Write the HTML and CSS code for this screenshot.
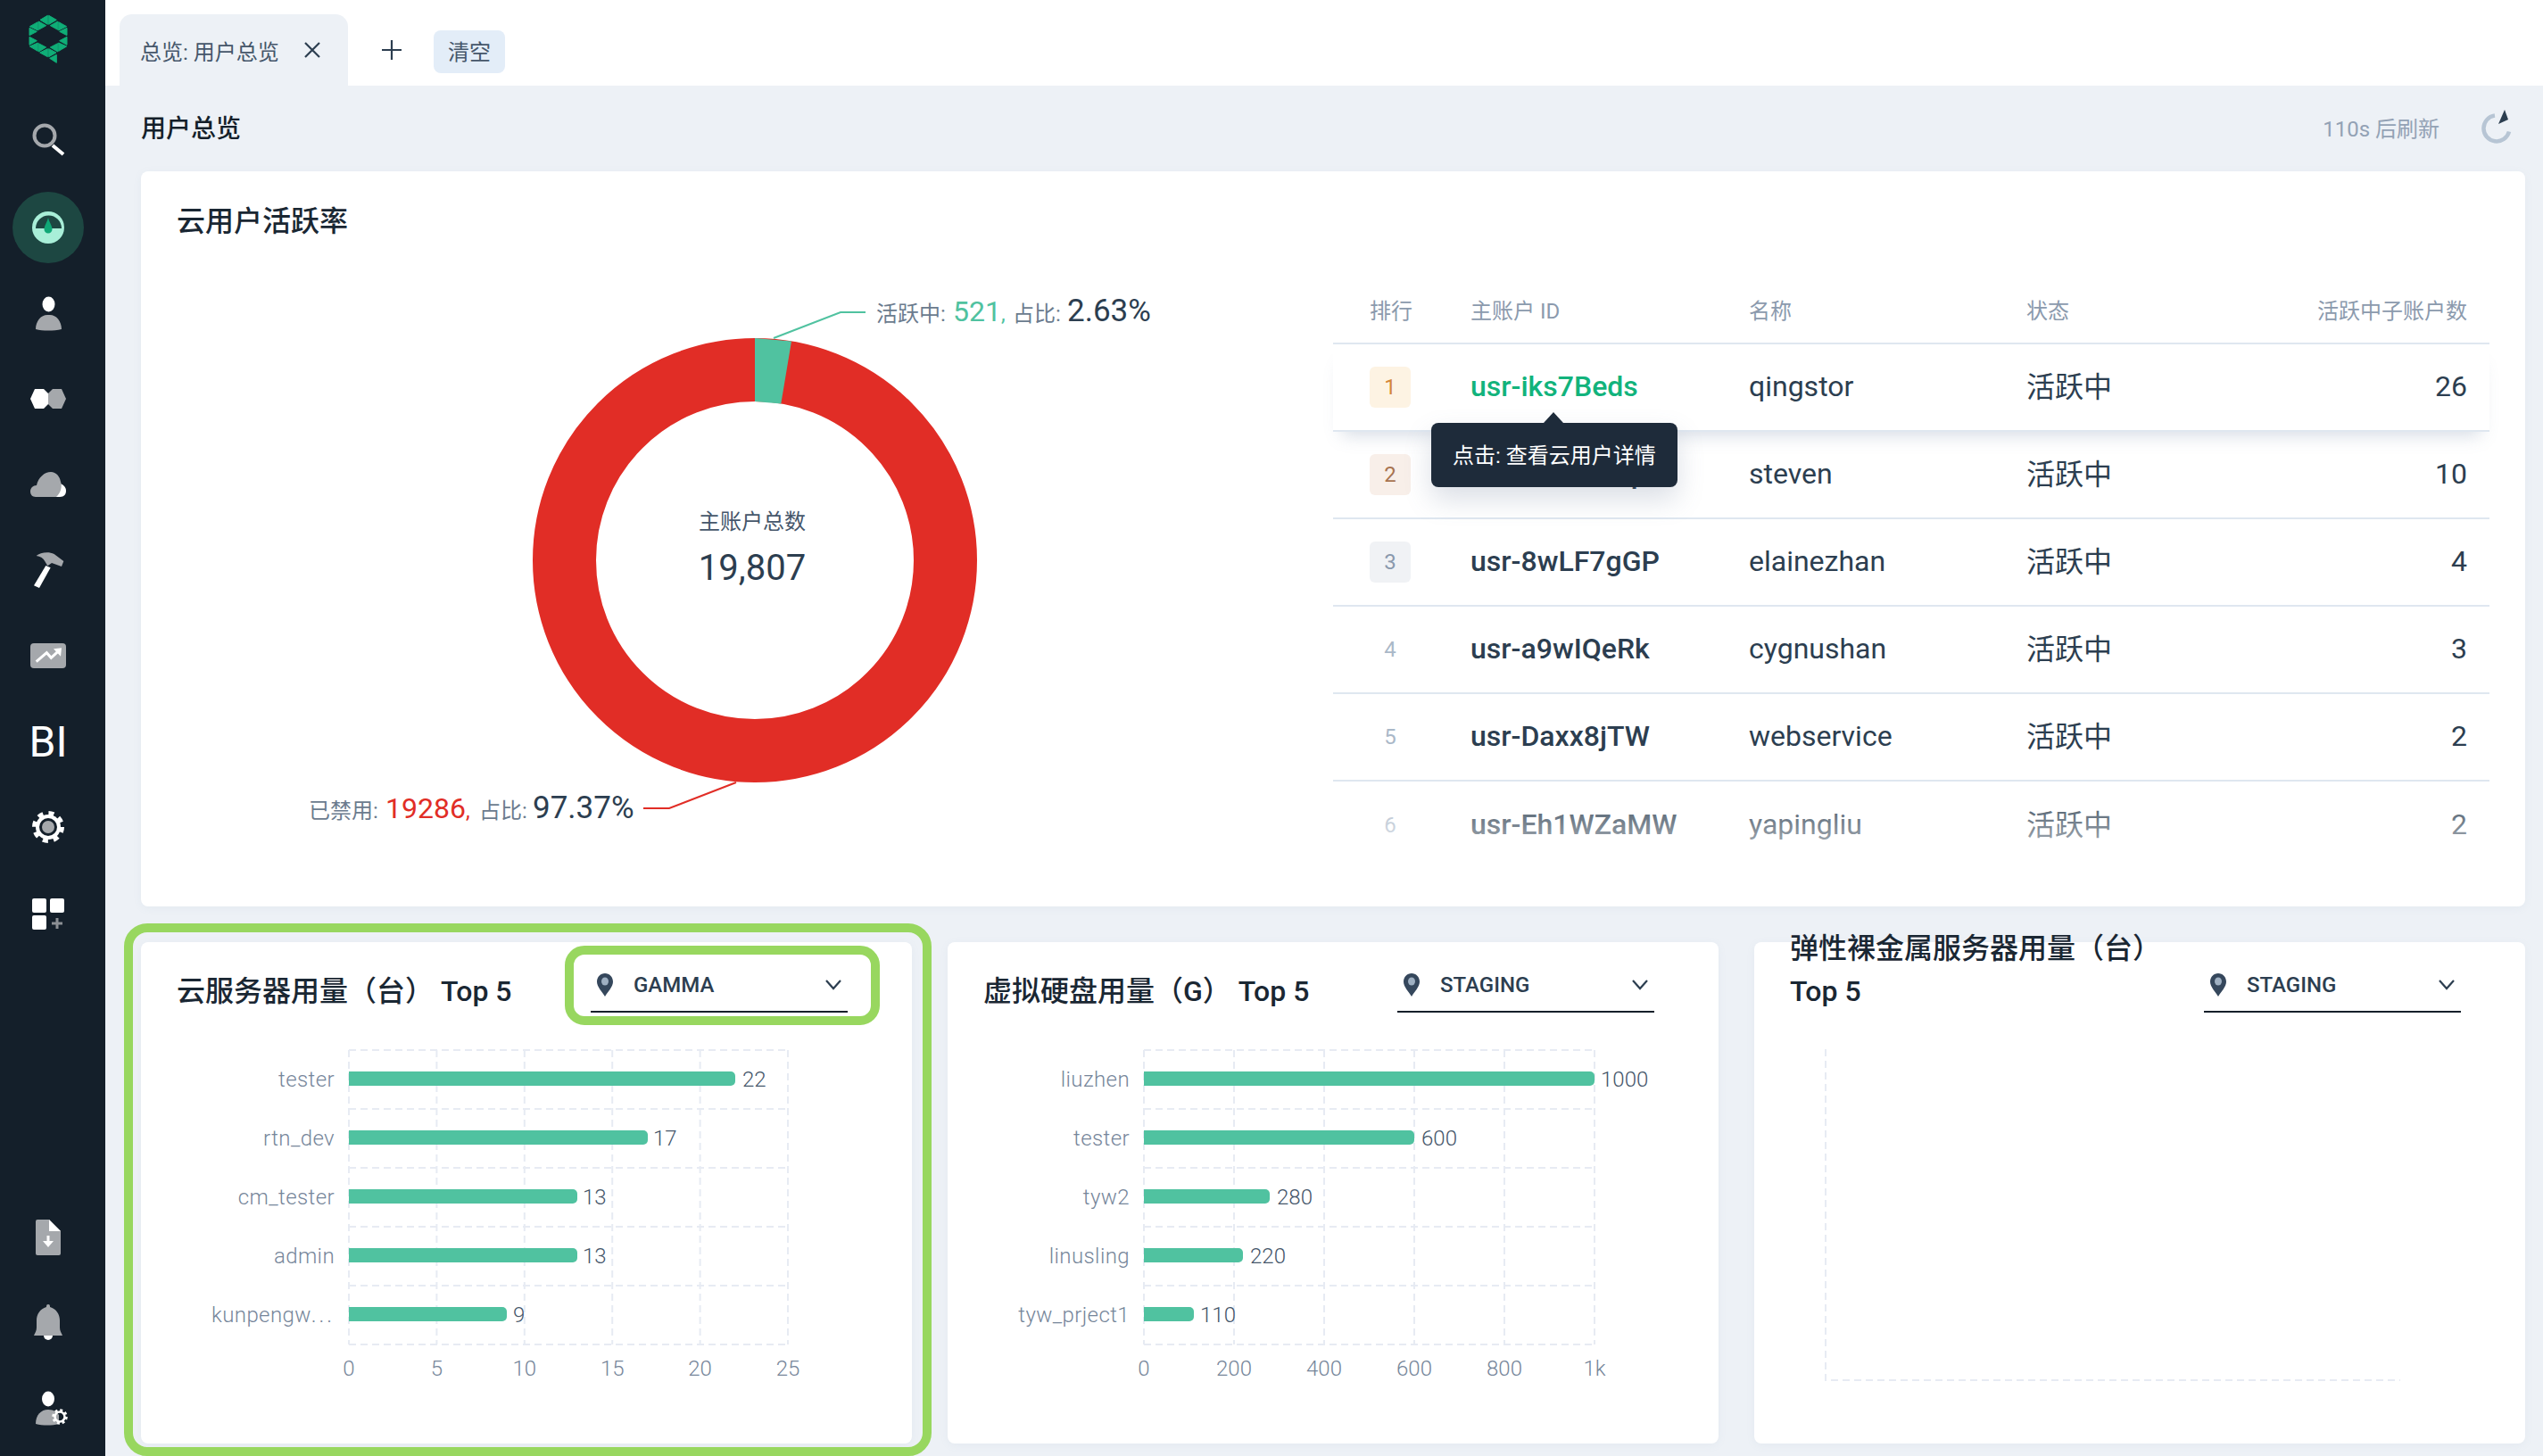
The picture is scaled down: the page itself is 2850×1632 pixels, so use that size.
FILE: index.html
```html
<!DOCTYPE html>
<html lang="zh-CN">
<head>
  <meta charset="UTF-8">
  <meta name="viewport" content="width=device-width, initial-scale=1.0">
  <title>用户总览</title>
  <link rel="stylesheet" href="styles.css">
</head>
<body>
  <aside class="sidebar">
    <div class="logo">
      <svg width="80" height="80" viewBox="0 0 240 240" fill="#0fae77" stroke="#0fae77" stroke-width="3">
        <polygon points="118,28 118,58 93,43"/><polygon points="88,48 88,76 113,62"/>
        <polygon points="122,28 148,43 122,58"/><polygon points="152,48 152,76 127,62"/>
        <polygon points="155,50 182,65 155,78"/><polygon points="183,70 183,95 158,82"/>
        <polygon points="85,50 58,65 85,78"/><polygon points="57,70 57,95 82,82"/>
        <polygon points="183,100 183,127 158,113"/><polygon points="57,100 57,127 82,113"/>
        <polygon points="58,132 85,120 85,148"/><polygon points="88,122 113,135 88,150"/>
        <polygon points="92,153 118,140 118,167"/><polygon points="122,140 147,153 122,167"/>
        <polygon points="127,135 152,122 152,150"/><polygon points="155,120 182,132 155,148"/>
        <polygon points="148,160 148,187 125,172"/>
      </svg>
    </div>
    <nav class="nav">
      <a class="nav-item">
        <svg width="48" height="48" viewBox="0 0 48 48" fill="none">
          <line x1="29" y1="28" x2="41" y2="38" stroke="#fff" stroke-width="4"/>
          <circle cx="20" cy="17" r="11.5" stroke="#a5a8ac" stroke-width="4"/>
        </svg>
      </a>
      <a class="nav-item nav-item-active">
        <svg width="80" height="80" viewBox="0 0 80 80">
          <circle cx="40" cy="40" r="40" fill="#1d4742"/>
          <circle cx="40" cy="40" r="18" fill="#a8efd8"/>
          <path d="M26 41A14.5 14.5 0 0 1 55 41Z" fill="#1d4742"/>
          <path d="M40 29C41 34 44.500 38 44.500 42A4.500 4.500 0 0 1 35.500 42C35.500 38 39 34 40 29Z" fill="#10a877"/>
        </svg>
      </a>
      <a class="nav-item">
        <svg width="48" height="48" viewBox="0 0 48 48">
          <path d="M10 42C10 32 17 25 24.500 26C32 25 39 32 39 42C30 44 18 44 10 42Z" fill="#a5a8ac"/>
          <ellipse cx="24.500" cy="14" rx="7" ry="8.500" fill="#fff"/>
        </svg>
      </a>
      <a class="nav-item">
        <svg width="48" height="48" viewBox="0 0 48 48">
          <polygon points="4,24 9,13 19,13 24,18 24,30 19,35 9,35" fill="#fff"/>
          <polygon points="24,18 29,13 39,13 44,24 39,35 29,35 24,30" fill="#a5a8ac"/>
        </svg>
      </a>
      <a class="nav-item">
        <svg width="48" height="48" viewBox="0 0 48 48">
          <path d="M26 38H37C42 38 44 35 44 31C44 27 41 24 37 23L30 30Z" fill="#fff"/>
          <path d="M10 38C6 38 4 35 4 32C4 28 7 25 11 25C13 16 20 10 27 10C33 10 37 15 38 21C40 26 38 34 33 38Z" fill="#a5a8ac"/>
        </svg>
      </a>
      <a class="nav-item">
        <svg width="48" height="48" viewBox="48 18 144 144">
          <polygon points="112,75 128,82 90,150 72,142" fill="#fff"/>
          <path d="M80 42C92 32 120 26 140 36L172 60L165 78L132 66L118 76L110 62C104 50 94 44 80 42Z" fill="#a5a8ac"/>
        </svg>
      </a>
      <a class="nav-item">
        <svg width="48" height="48" viewBox="48 306 144 144">
          <rect x="60" y="336" width="120" height="84" rx="12" fill="#a5a8ac"/>
          <polyline points="80,398 115,368 130,385 155,362" fill="none" stroke="#fff" stroke-width="9"/>
          <polygon points="138,355 165,352 162,380" fill="#fff"/>
        </svg>
      </a>
      <a class="nav-item nav-text">BI</a>
      <a class="nav-item">
        <svg width="48" height="48" viewBox="0 0 48 48">
          <circle cx="24" cy="24" r="15.500" fill="none" stroke="#fff" stroke-width="5" stroke-dasharray="6 6.170"/>
          <circle cx="24" cy="24" r="14" fill="#fff"/>
          <circle cx="24" cy="24" r="10" fill="#141f2a"/>
          <circle cx="24" cy="24" r="7" fill="#a5a8ac"/>
        </svg>
      </a>
      <a class="nav-item">
        <svg width="48" height="48" viewBox="0 0 48 48">
          <rect x="6" y="8" width="16" height="16" rx="2" fill="#fff"/>
          <rect x="26" y="8" width="16" height="16" rx="2" fill="#fff"/>
          <rect x="6" y="27" width="16" height="16" rx="2" fill="#fff"/>
          <path d="M28 36H40M34 30V42" stroke="#8b8f94" stroke-width="3"/>
        </svg>
      </a>
    </nav>
    <nav class="nav nav-bottom">
      <a class="nav-item">
        <svg width="48" height="48" viewBox="0 0 48 48">
          <path d="M12 5H25L38 18V43A2 2 0 0 1 36 45H12A2 2 0 0 1 10 43V7A2 2 0 0 1 12 5Z" fill="#a5a8ac"/>
          <polygon points="25,5 38,18 25,18" fill="#fff"/>
          <path d="M24 23V33" stroke="#fff" stroke-width="3"/>
          <polygon points="18,29 30,29 24,36" fill="#fff"/>
        </svg>
      </a>
      <a class="nav-item">
        <svg width="48" height="48" viewBox="0 0 48 48">
          <circle cx="24" cy="39" r="5" fill="#fff"/>
          <path d="M22 6A2 2 0 0 1 26 6V7C33 9 37 15 37 22V30C37 34 39 36 40 39H8C9 36 11 34 11 30V22C11 15 15 9 22 7Z" fill="#a5a8ac"/>
        </svg>
      </a>
      <a class="nav-item">
        <svg width="48" height="48" viewBox="0 0 48 48">
          <path d="M10 42C10 32 16 26 24 26C30 26 34 29 36 32V42C28 44 18 44 10 42Z" fill="#a5a8ac"/>
          <ellipse cx="24" cy="14" rx="7" ry="8.500" fill="#fff"/>
          <circle cx="37" cy="34" r="7" fill="none" stroke="#fff" stroke-width="3.500" stroke-dasharray="2.800 2.700"/>
          <circle cx="37" cy="34" r="5.500" fill="none" stroke="#fff" stroke-width="2.500"/>
        </svg>
      </a>
    </nav>
  </aside>

  <div class="main">
    <div class="tabs">
      <div class="tab">
        <span>总览: 用户总览</span>
        <svg class="tab-close" width="20" height="20" viewBox="0 0 20 20"><path d="M2 2L18 18M18 2L2 18" stroke="#2c3e50" stroke-width="2.200"/></svg>
      </div>
      <svg class="tab-add" width="24" height="24" viewBox="0 0 24 24"><path d="M1 12H23M12 1V23" stroke="#2c3e50" stroke-width="2.200"/></svg>
      <button class="tab-clear">清空</button>
    </div>

    <div class="page">
      <div class="page-head">
        <h1 class="page-title">用户总览</h1>
        <span class="refresh-text">110s 后刷新</span>
        <svg class="refresh-icon" width="40" height="44" viewBox="0 0 40 44">
          <path d="M17 9.500A14.500 14.500 0 1 0 33 27.500" fill="none" stroke="#b7c5d4" stroke-width="4.500"/>
          <polygon points="28,3 32,14 21,19" fill="#2c3e50"/>
        </svg>
      </div>

      <section class="card overview">
        <h2 class="card-title">云用户活跃率</h2>
        <div class="overview-body">
          <svg class="donut" width="1336" height="700" viewBox="0 0 1336 700">
            <circle cx="688" cy="328" r="213.500" fill="none" stroke="#e12d26" stroke-width="71"/>
            <path d="M688 79L729 82.400L717.300 152.400L688 150Z" fill="#50c2a0"/>
            <polyline points="709,79 784,50 812,50" class="leader-green"/>
            <polyline points="667,577 592,606 563,606" class="leader-red"/>
            <text y="60" class="donut-label">
              <tspan x="824">活跃中:</tspan>
              <tspan x="910" class="donut-num num-green">521</tspan><tspan class="num-green">,</tspan>
              <tspan x="977">占比:</tspan>
              <tspan x="1038" class="donut-percent">2.63%</tspan>
            </text>
            <text y="617" class="donut-label">
              <tspan x="188">已禁用:</tspan>
              <tspan x="274" class="donut-num num-red">19286</tspan><tspan class="num-red">,</tspan>
              <tspan x="379">占比:</tspan>
              <tspan x="439" class="donut-percent">97.37%</tspan>
            </text>
            <text x="685" y="293" class="donut-center-label">主账户总数</text>
            <text x="685" y="350" class="donut-center-value">19,807</text>
          </svg>

          <div class="rank-table">
            <div class="rank-row rank-head">
              <span class="rank-first">排行</span>
              <span>主账户 ID</span>
              <span>名称</span>
              <span>状态</span>
              <span class="cell-right">活跃中子账户数</span>
            </div>
            <div class="rank-row rank-row-hover">
              <span class="rank-first"><i class="rank rank-1">1</i></span>
              <span class="user-id user-id-link">usr-iks7Beds</span>
              <span>qingstor</span>
              <span class="status">活跃中</span>
              <span class="cell-right">26</span>
              <div class="tooltip">点击: 查看云用户详情</div>
            </div>
            <div class="rank-row">
              <span class="rank-first"><i class="rank rank-2">2</i></span>
              <span class="user-id">usr-t4BxNe9p</span>
              <span>steven</span>
              <span class="status">活跃中</span>
              <span class="cell-right">10</span>
            </div>
            <div class="rank-row">
              <span class="rank-first"><i class="rank rank-3">3</i></span>
              <span class="user-id">usr-8wLF7gGP</span>
              <span>elainezhan</span>
              <span class="status">活跃中</span>
              <span class="cell-right">4</span>
            </div>
            <div class="rank-row">
              <span class="rank-first"><i class="rank">4</i></span>
              <span class="user-id">usr-a9wIQeRk</span>
              <span>cygnushan</span>
              <span class="status">活跃中</span>
              <span class="cell-right">3</span>
            </div>
            <div class="rank-row">
              <span class="rank-first"><i class="rank">5</i></span>
              <span class="user-id">usr-Daxx8jTW</span>
              <span>webservice</span>
              <span class="status">活跃中</span>
              <span class="cell-right">2</span>
            </div>
            <div class="rank-row rank-row-last">
              <span class="rank-first"><i class="rank">6</i></span>
              <span class="user-id">usr-Eh1WZaMW</span>
              <span>yapingliu</span>
              <span class="status">活跃中</span>
              <span class="cell-right">2</span>
            </div>
            <div class="rank-fade"></div>
          </div>
        </div>
      </section>

      <div class="chart-cards">
        <section class="card chart-card">
          <div class="chart-head">
            <h2 class="chart-title">云服务器用量（台） Top 5</h2>
            <div class="region-select">
              <svg width="20" height="26" viewBox="0 0 20 26"><path d="M10 0C15 0 19 4 19 9.500C19 15 13 21 10 26C7 21 1 15 1 9.500C1 4 5 0 10 0Z" fill="#35475c"/><ellipse cx="10" cy="9" rx="4" ry="4.500" fill="#9fb0c2"/></svg>
              <span class="region-name">GAMMA</span>
              <svg class="chevron" width="18" height="12" viewBox="0 0 18 12"><path d="M1 1L9 10L17 1" fill="none" stroke="#2c3e50" stroke-width="2.200"/></svg>
            </div>
          </div>
          <svg class="chart" width="864" height="483" viewBox="0 0 864 483">
            <path class="grid-line" d="M233 42V372M331.400 42V372M429.800 42V372M528.200 42V372M626.600 42V372M725 42V372"/>
            <path class="grid-line" d="M233 42H725M233 108H725M233 174H725M233 240H725M233 306H725M233 372H725"/>
            <path class="bar" d="M233 66H661a5 5 0 0 1 5 5v6a5 5 0 0 1-5 5H233Z"/>
            <path class="bar" d="M233 132H563a5 5 0 0 1 5 5v6a5 5 0 0 1-5 5H233Z"/>
            <path class="bar" d="M233 198H484a5 5 0 0 1 5 5v6a5 5 0 0 1-5 5H233Z"/>
            <path class="bar" d="M233 264H484a5 5 0 0 1 5 5v6a5 5 0 0 1-5 5H233Z"/>
            <path class="bar" d="M233 330H405a5 5 0 0 1 5 5v6a5 5 0 0 1-5 5H233Z"/>
            <text class="axis-label" x="217" y="83">tester</text>
            <text class="axis-label" x="217" y="149">rtn_dev</text>
            <text class="axis-label" x="217" y="215">cm_tester</text>
            <text class="axis-label" x="217" y="281">admin</text>
            <text class="axis-label" x="217" y="347">kunpengw<tspan class="ellipsis">...</tspan></text>
            <text class="value-label" x="674" y="83">22</text>
            <text class="value-label" x="574" y="149">17</text>
            <text class="value-label" x="495" y="215">13</text>
            <text class="value-label" x="495" y="281">13</text>
            <text class="value-label" x="417" y="347">9</text>
            <text class="tick-label" x="233" y="407">0</text>
            <text class="tick-label" x="331.400" y="407">5</text>
            <text class="tick-label" x="429.800" y="407">10</text>
            <text class="tick-label" x="528.200" y="407">15</text>
            <text class="tick-label" x="626.600" y="407">20</text>
            <text class="tick-label" x="725" y="407">25</text>
          </svg>
          <div class="highlight highlight-card"></div>
          <div class="highlight highlight-select"></div>
        </section>

        <section class="card chart-card">
          <div class="chart-head">
            <h2 class="chart-title">虚拟硬盘用量（G） Top 5</h2>
            <div class="region-select">
              <svg width="20" height="26" viewBox="0 0 20 26"><path d="M10 0C15 0 19 4 19 9.500C19 15 13 21 10 26C7 21 1 15 1 9.500C1 4 5 0 10 0Z" fill="#35475c"/><ellipse cx="10" cy="9" rx="4" ry="4.500" fill="#9fb0c2"/></svg>
              <span class="region-name">STAGING</span>
              <svg class="chevron" width="18" height="12" viewBox="0 0 18 12"><path d="M1 1L9 10L17 1" fill="none" stroke="#2c3e50" stroke-width="2.200"/></svg>
            </div>
          </div>
          <svg class="chart" width="864" height="483" viewBox="0 0 864 483">
            <path class="grid-line" d="M220 42V372M321 42V372M422 42V372M523 42V372M624 42V372M725 42V372"/>
            <path class="grid-line" d="M220 42H725M220 108H725M220 174H725M220 240H725M220 306H725M220 372H725"/>
            <path class="bar" d="M220 66H720a5 5 0 0 1 5 5v6a5 5 0 0 1-5 5H220Z"/>
            <path class="bar" d="M220 132H518a5 5 0 0 1 5 5v6a5 5 0 0 1-5 5H220Z"/>
            <path class="bar" d="M220 198H356a5 5 0 0 1 5 5v6a5 5 0 0 1-5 5H220Z"/>
            <path class="bar" d="M220 264H326a5 5 0 0 1 5 5v6a5 5 0 0 1-5 5H220Z"/>
            <path class="bar" d="M220 330H271a5 5 0 0 1 5 5v6a5 5 0 0 1-5 5H220Z"/>
            <text class="axis-label" x="204" y="83">liuzhen</text>
            <text class="axis-label" x="204" y="149">tester</text>
            <text class="axis-label" x="204" y="215">tyw2</text>
            <text class="axis-label" x="204" y="281">linusling</text>
            <text class="axis-label" x="204" y="347">tyw_prject1</text>
            <text class="value-label" x="732" y="83">1000</text>
            <text class="value-label" x="531" y="149">600</text>
            <text class="value-label" x="369" y="215">280</text>
            <text class="value-label" x="339" y="281">220</text>
            <text class="value-label" x="283" y="347">110</text>
            <text class="tick-label" x="220" y="407">0</text>
            <text class="tick-label" x="321" y="407">200</text>
            <text class="tick-label" x="422" y="407">400</text>
            <text class="tick-label" x="523" y="407">600</text>
            <text class="tick-label" x="624" y="407">800</text>
            <text class="tick-label" x="725" y="407">1k</text>
          </svg>
        </section>

        <section class="card chart-card">
          <div class="chart-head">
            <h2 class="chart-title">弹性裸金属服务器用量（台） Top 5</h2>
            <div class="region-select">
              <svg width="20" height="26" viewBox="0 0 20 26"><path d="M10 0C15 0 19 4 19 9.500C19 15 13 21 10 26C7 21 1 15 1 9.500C1 4 5 0 10 0Z" fill="#35475c"/><ellipse cx="10" cy="9" rx="4" ry="4.500" fill="#9fb0c2"/></svg>
              <span class="region-name">STAGING</span>
              <svg class="chevron" width="18" height="12" viewBox="0 0 18 12"><path d="M1 1L9 10L17 1" fill="none" stroke="#2c3e50" stroke-width="2.200"/></svg>
            </div>
          </div>
          <svg class="chart" width="864" height="483" viewBox="0 0 864 483">
            <path class="grid-line" d="M80 41V412H724"/>
          </svg>
        </section>
      </div>
    </div>
  </div>
</body>
</html>
```

FILE: styles.css
```css
* {
  box-sizing: border-box;
}

html,
body {
  height: 100%;
}

body {
  margin: 0;
  display: flex;
  height: 1632px;
  overflow: hidden;
  font-family: Roboto, "Noto Sans CJK SC", sans-serif;
  color: #2c3e50;
  background-color: #fff;
}

/* sidebar */
.sidebar {
  width: 118px;
  flex: none;
  display: flex;
  flex-direction: column;
  background-color: #141f2a;
  padding-bottom: 6px;
}

.logo {
  height: 111px;
  padding: 8px 0 0 14px;
}

.logo svg {
  display: block;
}

.nav {
  display: flex;
  flex-direction: column;
}

.nav-bottom {
  margin-top: auto;
}

.nav-item {
  height: 96px;
  display: flex;
  align-items: center;
  justify-content: center;
  padding-right: 10px;
}

.nav-text {
  color: #fff;
  font-size: 48px;
  font-weight: 400;
}

/* tabs */
.main {
  flex: 1;
  min-width: 0;
  display: flex;
  flex-direction: column;
}

.tabs {
  height: 96px;
  flex: none;
  display: flex;
  align-items: flex-end;
  padding-left: 16px;
  background-color: #fff;
}

.tab {
  width: 256px;
  height: 80px;
  display: flex;
  align-items: center;
  justify-content: space-between;
  padding: 0 30px 0 23px;
  font-size: 24px;
  color: #45566a;
  background-color: #edf1f6;
  border-radius: 14px 14px 0 0;
}

.tab-add {
  margin: 0 35px 28px 37px;
}

.tab-clear {
  width: 80px;
  height: 48px;
  margin-bottom: 14px;
  padding: 0 0 4px;
  border: none;
  border-radius: 8px;
  background-color: #e3edf8;
  color: #45566a;
  font-family: inherit;
  font-size: 24px;
}

/* page */
.page {
  flex: 1;
  padding: 0 20px 0 40px;
  background-color: #edf1f6;
}

.page-head {
  height: 96px;
  display: flex;
  align-items: center;
  padding: 0 11px 4px 0;
}

.page-title {
  margin: 0 auto 0 0;
  font-size: 28px;
  font-weight: 500;
  color: #141f2a;
}

.refresh-text {
  font-size: 24px;
  color: #93a2b5;
}

.refresh-icon {
  margin-left: 45px;
}

.card {
  background-color: #fff;
  border-radius: 8px;
  box-shadow: 0 2px 10px rgba(130, 150, 180, 0.08);
}

.overview {
  height: 824px;
  padding-top: 32px;
}

.card-title {
  margin: 0;
  padding-left: 40px;
  font-size: 32px;
  line-height: 48px;
  font-weight: 500;
  color: #1a2733;
}

.overview-body {
  display: flex;
  margin-top: 28px;
}

/* donut */
.donut {
  flex: none;
  display: block;
}

.leader-green,
.leader-red {
  fill: none;
  stroke-width: 2;
}

.leader-green {
  stroke: #50c2a0;
}

.leader-red {
  stroke: #e12d26;
}

.donut-label {
  font-size: 24px;
  fill: #6b7b8e;
}

.donut-num {
  font-size: 32px;
  fill: #2c3e50;
}

.donut-percent {
  font-size: 35px;
  fill: #2c3e50;
}

.donut-label .num-green {
  fill: #50c2a0;
}

.donut-label .num-red {
  fill: #e12d26;
}

.donut-center-label {
  font-size: 24px;
  fill: #45566a;
  text-anchor: middle;
}

.donut-center-value {
  font-size: 40px;
  fill: #2c3e50;
  text-anchor: middle;
}

/* rank table */
.rank-table {
  position: relative;
  width: 1296px;
  flex: none;
  margin-top: 8px;
}

.rank-row {
  position: relative;
  display: grid;
  grid-template-columns: 154px 312px 311px 1fr auto;
  align-items: center;
  height: 98px;
  padding: 0 25px 3px 0;
  font-size: 32px;
  color: #2c3e50;
  border-bottom: 2px solid #dfe7f0;
}

.rank-head {
  height: 78px;
  padding-bottom: 0;
  font-size: 24px;
  color: #8b9aad;
}

.rank-row-hover {
  z-index: 1;
  background-color: #fff;
  box-shadow: 0 14px 18px -10px rgba(120, 140, 170, 0.3);
}

.rank-row-last {
  border-bottom: none;
}

.rank-first {
  padding-left: 41px;
}

.rank {
  width: 46px;
  height: 46px;
  margin-top: 3px;
  display: flex;
  align-items: center;
  justify-content: center;
  font-size: 24px;
  font-style: normal;
  color: #aab8c8;
  border-radius: 6px;
}

.rank-1 {
  color: #d4863a;
  background-color: #fdf3e3;
}

.rank-2 {
  color: #a87450;
  background-color: #f8efe9;
}

.rank-3 {
  color: #8a99ad;
  background-color: #f0f2f5;
}

.user-id {
  font-weight: 500;
}

.user-id-link {
  color: #12b37c;
}

.status {
  padding-bottom: 3px;
}

.cell-right {
  text-align: right;
}

.rank-fade {
  position: absolute;
  left: 0;
  right: 0;
  bottom: 0;
  height: 120px;
  background: linear-gradient(rgba(255, 255, 255, 0), #fff);
  pointer-events: none;
}

.tooltip {
  position: absolute;
  left: 110px;
  top: 88px;
  width: 276px;
  height: 72px;
  display: flex;
  align-items: center;
  justify-content: center;
  padding-bottom: 4px;
  font-size: 24px;
  color: #fff;
  background-color: #1e2b3a;
  border-radius: 8px;
  box-shadow: 0 14px 30px rgba(90, 110, 140, 0.22);
}

.tooltip::before {
  content: "";
  position: absolute;
  left: 126px;
  top: -12px;
  border-left: 11px solid transparent;
  border-right: 11px solid transparent;
  border-bottom: 12px solid #1e2b3a;
}

/* chart cards */
.chart-cards {
  display: grid;
  grid-template-columns: repeat(3, 864px);
  gap: 40px;
  margin-top: 40px;
}

.chart-card {
  position: relative;
  height: 562px;
  padding-top: 23px;
}

.chart-head {
  height: 56px;
  display: flex;
  align-items: flex-end;
  padding: 0 72px 0 40px;
}

.chart-title {
  flex: 1;
  min-width: 0;
  margin: 0;
  font-size: 32px;
  line-height: 48px;
  font-weight: 500;
  color: #1a2733;
}

.region-select {
  width: 288px;
  height: 62px;
  flex: none;
  display: flex;
  align-items: center;
  padding: 2px 7px 0 6px;
  border-bottom: 2px solid #141f2a;
}

.region-name {
  margin-left: 22px;
  font-size: 24px;
  font-weight: 500;
  color: #2c3e50;
}

.chevron {
  margin-left: auto;
}

.chart {
  display: block;
}

.grid-line {
  fill: none;
  stroke: #e7ebf3;
  stroke-width: 2;
  stroke-dasharray: 8 5;
}

.bar {
  fill: #50c2a0;
}

.axis-label {
  font-size: 24px;
  font-weight: 300;
  letter-spacing: 0.4px;
  fill: #76869a;
  text-anchor: end;
}

.ellipsis {
  letter-spacing: 3px;
}

.value-label {
  font-size: 24px;
  font-weight: 300;
  fill: #45566a;
}

.tick-label {
  font-size: 24px;
  font-weight: 300;
  fill: #76869a;
  text-anchor: middle;
}

/* annotation frames drawn over the first card */
.highlight {
  position: absolute;
  border: 10px solid #98d75f;
  pointer-events: none;
}

.highlight-card {
  left: -19px;
  top: -21px;
  width: 905px;
  height: 597px;
  border-radius: 26px;
}

.highlight-select {
  left: 475px;
  top: 4px;
  width: 353px;
  height: 89px;
  border-radius: 22px;
}
```
